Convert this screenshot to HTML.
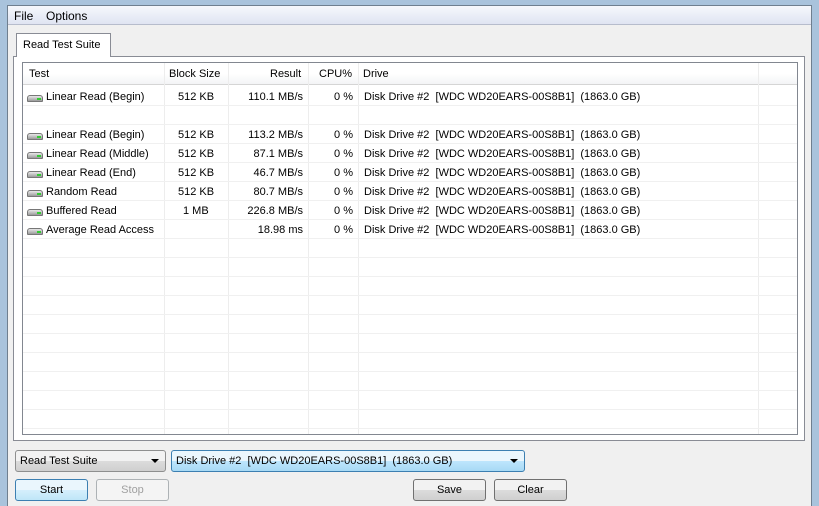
<!DOCTYPE html>
<html><head><style>
*{box-sizing:border-box;margin:0;padding:0}
body{width:819px;height:506px;overflow:hidden;background:#a9c3dc;font-family:"Liberation Sans",sans-serif;font-size:11px;color:#000;position:relative}
.win{position:absolute;left:7px;top:5px;width:805px;height:501px;background:#f0f0f0;border:1px solid #6f7f8f;border-bottom:none}
.menu{position:absolute;left:0;top:0;width:803px;height:19px;background:linear-gradient(#f6f8fc,#dfe4f2);border-bottom:1px solid #b6bccc}
.menu span{position:absolute;top:3px;font-size:12px}
.tab{position:absolute;left:8px;top:27px;width:95px;height:24px;background:#fff;border:1px solid #898c95;border-bottom:none;z-index:2;padding:5px 0 0 6px}
.panel{position:absolute;left:5px;top:50px;width:792px;height:385px;background:#fff;border:1px solid #898c95}
.list{position:absolute;left:8px;top:5px;width:776px;height:373px;border:1px solid #828790;background:#fff;overflow:hidden}
.c{position:absolute;top:0;white-space:nowrap}
.hdr{position:absolute;left:0;top:0;width:774px;height:22px;background:linear-gradient(#fff 50%,#f3f4f6);border-bottom:1px solid #d5d5d5}
.vl{position:absolute;top:0;width:1px;height:373px;background:#ededed}
.hl{position:absolute;left:0;width:774px;height:1px;background:#f0f0f0}
.r{position:absolute;left:0;width:774px;height:19px}
.r span{position:absolute;top:4px;white-space:nowrap}
.ic{position:absolute;left:4px;top:8px;width:16px;height:7px;border-radius:3px 3px 1px 1px;background:linear-gradient(#e8e8e8,#9a9a9a);border:1px solid #777}
.ic:after{content:"";position:absolute;right:1px;top:2px;width:4px;height:2px;background:#3c3}
.cb{position:absolute;height:22px;border:1px solid #8e8f8f;border-radius:3px;padding:4px 0 0 4px}
.cb:after{content:"";position:absolute;right:6px;top:8px;border:4px solid transparent;border-top:4px solid #000;border-bottom:none}
.btn{position:absolute;top:473px;height:22px;border:1px solid #707070;border-radius:3px;background:linear-gradient(#f2f2f2 50%,#dcdcdc 50%,#cfcfcf);text-align:center;padding-top:4px}
</style></head><body>
<div class="win">
<div class="menu"><span style="left:6px">File</span><span style="left:38px">Options</span></div>
<div class="tab">Read Test Suite</div>
<div class="panel"><div class="list">
<div class="hdr"></div>
<div class="vl" style="left:141px"></div><div class="vl" style="left:205px"></div><div class="vl" style="left:285px"></div><div class="vl" style="left:335px"></div><div class="vl" style="left:735px"></div>
<span class="c" style="left:6px;top:5px">Test</span><span class="c" style="left:146px;top:5px">Block Size</span><span class="c" style="left:247px;top:5px">Result</span><span class="c" style="left:296px;top:5px">CPU%</span><span class="c" style="left:340px;top:5px">Drive</span>
<div class="hl" style="top:42px"></div><div class="hl" style="top:61px"></div><div class="hl" style="top:80px"></div><div class="hl" style="top:99px"></div><div class="hl" style="top:118px"></div><div class="hl" style="top:137px"></div><div class="hl" style="top:156px"></div><div class="hl" style="top:175px"></div><div class="hl" style="top:194px"></div><div class="hl" style="top:213px"></div><div class="hl" style="top:232px"></div><div class="hl" style="top:251px"></div><div class="hl" style="top:270px"></div><div class="hl" style="top:289px"></div><div class="hl" style="top:308px"></div><div class="hl" style="top:327px"></div><div class="hl" style="top:346px"></div><div class="hl" style="top:365px"></div>
<div class="r" style="top:24px"><i class="ic"></i><span style="left:23px">Linear Read (Begin)</span><span style="left:155px">512 KB</span><span style="right:494px">110.1 MB/s</span><span style="right:444px">0 %</span><span style="left:341px">Disk Drive #2&nbsp; [WDC WD20EARS-00S8B1]&nbsp; (1863.0 GB)</span></div>
<div class="r" style="top:62px"><i class="ic"></i><span style="left:23px">Linear Read (Begin)</span><span style="left:155px">512 KB</span><span style="right:494px">113.2 MB/s</span><span style="right:444px">0 %</span><span style="left:341px">Disk Drive #2&nbsp; [WDC WD20EARS-00S8B1]&nbsp; (1863.0 GB)</span></div>
<div class="r" style="top:81px"><i class="ic"></i><span style="left:23px">Linear Read (Middle)</span><span style="left:155px">512 KB</span><span style="right:494px">87.1 MB/s</span><span style="right:444px">0 %</span><span style="left:341px">Disk Drive #2&nbsp; [WDC WD20EARS-00S8B1]&nbsp; (1863.0 GB)</span></div>
<div class="r" style="top:100px"><i class="ic"></i><span style="left:23px">Linear Read (End)</span><span style="left:155px">512 KB</span><span style="right:494px">46.7 MB/s</span><span style="right:444px">0 %</span><span style="left:341px">Disk Drive #2&nbsp; [WDC WD20EARS-00S8B1]&nbsp; (1863.0 GB)</span></div>
<div class="r" style="top:119px"><i class="ic"></i><span style="left:23px">Random Read</span><span style="left:155px">512 KB</span><span style="right:494px">80.7 MB/s</span><span style="right:444px">0 %</span><span style="left:341px">Disk Drive #2&nbsp; [WDC WD20EARS-00S8B1]&nbsp; (1863.0 GB)</span></div>
<div class="r" style="top:138px"><i class="ic"></i><span style="left:23px">Buffered Read</span><span style="left:160px">1 MB</span><span style="right:494px">226.8 MB/s</span><span style="right:444px">0 %</span><span style="left:341px">Disk Drive #2&nbsp; [WDC WD20EARS-00S8B1]&nbsp; (1863.0 GB)</span></div>
<div class="r" style="top:157px"><i class="ic"></i><span style="left:23px">Average Read Access</span><span style="right:494px">18.98 ms</span><span style="right:444px">0 %</span><span style="left:341px">Disk Drive #2&nbsp; [WDC WD20EARS-00S8B1]&nbsp; (1863.0 GB)</span></div>
</div></div>
<div class="cb" style="left:7px;top:444px;width:151px;background:linear-gradient(#f2f2f2 50%,#dcdcdc 50%,#cfcfcf)">Read Test Suite</div>
<div class="cb" style="left:163px;top:444px;width:354px;border-color:#3c7fb1;background:linear-gradient(#eaf6fd 50%,#bee6fd 50%,#a7d9f5)">Disk Drive #2&nbsp; [WDC WD20EARS-00S8B1]&nbsp; (1863.0 GB)</div>
<div class="btn" style="left:7px;width:73px;border-color:#3c7fb1;background:linear-gradient(#eaf6fd 50%,#d5effc 50%,#bfe6f8)">Start</div>
<div class="btn" style="left:88px;width:73px;border-color:#adb2b5;background:#f4f4f4;color:#a0a0a0">Stop</div>
<div class="btn" style="left:405px;width:73px">Save</div>
<div class="btn" style="left:486px;width:73px">Clear</div>
</div>
</body></html>
